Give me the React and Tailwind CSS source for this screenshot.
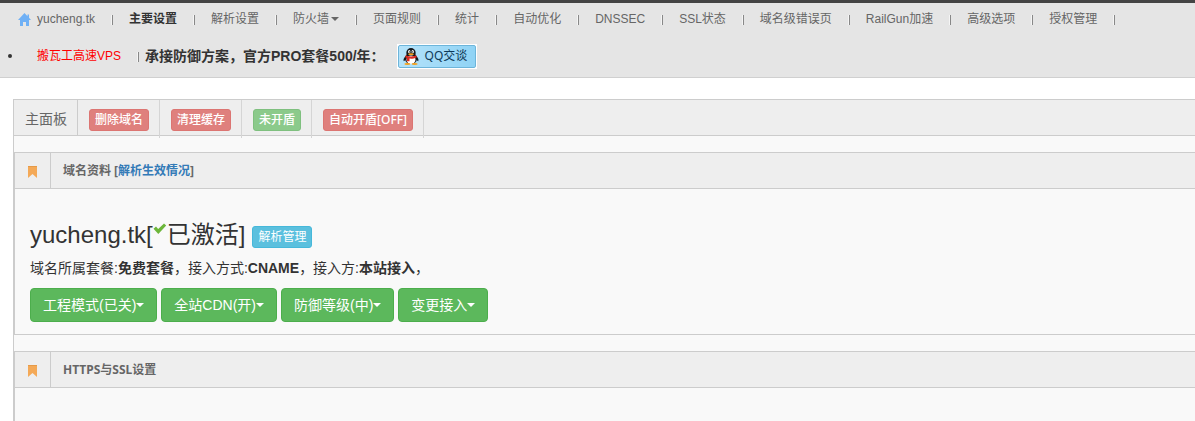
import clsx from "clsx";

const navItems = [
  { label: "主要设置", active: true },
  { label: "解析设置" },
  { label: "防火墙", menu: true },
  { label: "页面规则" },
  { label: "统计" },
  { label: "自动优化" },
  { label: "DNSSEC" },
  { label: "SSL状态" },
  { label: "域名级错误页" },
  { label: "RailGun加速" },
  { label: "高级选项" },
  { label: "授权管理" },
];

const tabActions = [
  { label: "删除域名", tone: "danger" },
  { label: "清理缓存", tone: "danger" },
  { label: "未开盾", tone: "success" },
  { label: "自动开盾[OFF]", tone: "danger" },
];

const modes = ["工程模式(已关)", "全站CDN(开)", "防御等级(中)", "变更接入"];

const Caret = () => (
  <svg viewBox="0 0 8 4" className="inline-block h-1 w-2 shrink-0" fill="currentColor">
    <path d="M0 0h8L4 4z" />
  </svg>
);

const Divider = () => (
  <span className="mt-px h-[10px] w-px shrink-0 bg-[#888] shadow-[-1px_0_0_#f5f5f5]" />
);

const HomeIcon = () => (
  <svg viewBox="0 0 13 13" className="h-[13px] w-[13px] shrink-0" fill="#6fb0f5">
    <path d="M6.5 0 0 7h2v6h3V9h3v4h3V7h2l-2-2.2V1.5H9.5v1.7z" />
  </svg>
);

const BookmarkIcon = () => (
  <svg viewBox="0 0 9 12" className="h-3 w-[9px]">
    <path d="M0 0h9v12L4.5 8 0 12z" fill="#f4a957" />
    <path d="M0 0h9v1H0z" fill="#e59a48" />
  </svg>
);

const CheckIcon = () => (
  <svg viewBox="0 0 14 12" className="mb-3 h-3 w-[14px] shrink-0" fill="#6cb63a">
    <path d="M0.5 5.8 3 3.6l2.2 2.3L11 0.4l2.2 2.1L5.3 11z" />
  </svg>
);

const PenguinIcon = () => (
  <svg viewBox="0 0 16 17" className="h-[17px] w-4 shrink-0">
    <path d="M3 8C0.8 9.6 0 12 0.8 13.2L3 11.5zM13 8c2.2 1.6 3 4 2.2 5.2L13 11.5z" fill="#17181c" />
    <ellipse cx="8" cy="10.5" rx="6" ry="5.5" fill="#17181c" />
    <ellipse cx="8" cy="5" rx="4.7" ry="5" fill="#17181c" />
    <ellipse cx="8" cy="11.8" rx="4.5" ry="4.2" fill="#fff" />
    <ellipse cx="6.3" cy="3.7" rx="1.2" ry="1.6" fill="#fff" />
    <ellipse cx="9.7" cy="3.7" rx="1.2" ry="1.6" fill="#fff" />
    <circle cx="6.7" cy="3.9" r="0.6" />
    <circle cx="9.3" cy="3.9" r="0.6" />
    <ellipse cx="8" cy="6.2" rx="2.8" ry="0.9" fill="#f5a11c" />
    <path d="M2.8 7.2c3 1.6 7.4 1.6 10.4 0l.6 2c-2.5 1.3-5 1.6-7.3 1.4v2.6H4V10c-.7-.2-1.3-.5-1.8-.8z" fill="#dc2b22" />
    <ellipse cx="4.3" cy="16" rx="3" ry="1" fill="#f5a11c" />
    <ellipse cx="11.7" cy="16" rx="3" ry="1" fill="#f5a11c" />
  </svg>
);

const SmallButton = ({ tone, children }) => (
  <button
    type="button"
    className={clsx(
      "h-[22px] rounded-[3px] border px-[5px] font-['Noto_Sans','Noto_Sans_CJK_SC',sans-serif] text-xs whitespace-nowrap text-white",
      tone === "danger" && "border-[#dc7572] bg-[#df807d] font-medium",
      tone === "success" && "border-[#7fc07f] bg-[#8bca8b] font-medium",
      tone === "info" && "border-[#46b8da] bg-[#5bc0de]"
    )}
  >
    {children}
  </button>
);

const Panel = ({ title, children, className }) => (
  <section className={clsx("border-y border-l border-[#ccc]", className)}>
    <header className="flex h-9 items-stretch border-b border-[#ccc] bg-[#eee]">
      <span className="flex w-9 items-center justify-center border-r border-[#ccc] pt-[2px]">
        <BookmarkIcon />
      </span>
      <h2 className="flex items-center px-3 font-['Noto_Sans','Noto_Sans_CJK_SC',sans-serif] text-xs font-bold text-[#666]">
        {title}
      </h2>
    </header>
    {children}
  </section>
);

export default function App() {
  return (
    <div className="flex min-h-screen flex-col bg-white font-['Liberation_Sans','Noto_Sans_CJK_SC',sans-serif] text-sm text-[#333]">
      <header className="border-t-3 border-b border-t-[#444] border-b-[#d0d0d0] bg-[#e5e5e5]">
        <nav className="flex h-8 items-center text-xs whitespace-nowrap text-[#666]">
          <a href="#home" className="flex items-center gap-[6px] pr-[17px] pl-[18px]">
            <HomeIcon />
            yucheng.tk
          </a>
          <Divider />
          {navItems.map((item) => (
            <div key={item.label} className="flex items-center">
              <a
                href="#nav"
                className={clsx("flex items-center gap-[2px] pr-[17px] pl-4", item.active && "font-bold text-[#333]")}
              >
                {item.label}
                {item.menu && <Caret />}
              </a>
              <Divider />
            </div>
          ))}
        </nav>
        <div className="flex h-[42px] items-center whitespace-nowrap">
          <span className="mr-[25px] ml-2 h-1 w-1 rounded-full bg-[#333]" />
          <a href="#vps" className="pr-[17px] text-xs text-[#f00]">
            搬瓦工高速VPS
          </a>
          <Divider />
          <strong className="pl-[6px]">承接防御方案，官方PRO套餐500/年：</strong>
          <a
            href="#qq"
            className="ml-3 flex h-[25px] items-center border border-white bg-white font-['Noto_Sans','Noto_Sans_CJK_SC',sans-serif] text-xs text-[#0f3a57]"
          >
            <span className="flex h-[23px] items-center gap-[6px] rounded-xs border border-[#6db5da] bg-linear-to-r from-[#b5e3fa] to-[#8fd3f5] pr-2 pl-1">
              <PenguinIcon />
              QQ交谈
            </span>
          </a>
        </div>
      </header>

      <main className="mt-[21px] ml-[13px] flex flex-1 flex-col border-t border-l border-[#ccc] bg-[#f9f9f9]">
        <div className="flex h-9 items-start border-b border-[#ccc] bg-[#eee]">
          <h1 className="flex h-[35px] items-center border-r border-[#ccc] pt-[2px] pr-[10px] pl-[11px] text-[#666]">
            主面板
          </h1>
          {tabActions.map((action) => (
            <div key={action.label} className="h-[38px] border-r border-[#d5d5d5] pt-[9px] pr-[10px] pl-[11px]">
              <SmallButton tone={action.tone}>{action.label}</SmallButton>
            </div>
          ))}
        </div>

        <Panel
          className="mt-4"
          title={
            <span>
              域名资料 [
              <a href="#dns" className="text-[#337ab7]">
                解析生效情况
              </a>
              ]
            </span>
          }
        >
          <div className="px-[15px] pt-[30px] pb-3">
            <div className="flex items-center">
              <h3 className="flex items-center text-2xl">
                yucheng.tk[
                <CheckIcon />
                已激活]
              </h3>
              <span className="ml-[7px] pt-[3px]">
                <SmallButton tone="info">解析管理</SmallButton>
              </span>
            </div>
            <p className="mt-[7px]">
              域名所属套餐:<b>免费套餐</b>，接入方式:<b>CNAME</b>，接入方:<b>本站接入</b>，
            </p>
            <div className="mt-[10px] flex gap-1">
              {modes.map((mode) => (
                <button
                  key={mode}
                  type="button"
                  className="flex h-[34px] items-center rounded border border-[#4cae4c] bg-[#5cb85c] px-3 text-white"
                >
                  {mode}
                  <Caret />
                </button>
              ))}
            </div>
          </div>
        </Panel>

        <Panel className="mt-4 flex-1 border-b-0" title="HTTPS与SSL设置" />
      </main>
    </div>
  );
}
